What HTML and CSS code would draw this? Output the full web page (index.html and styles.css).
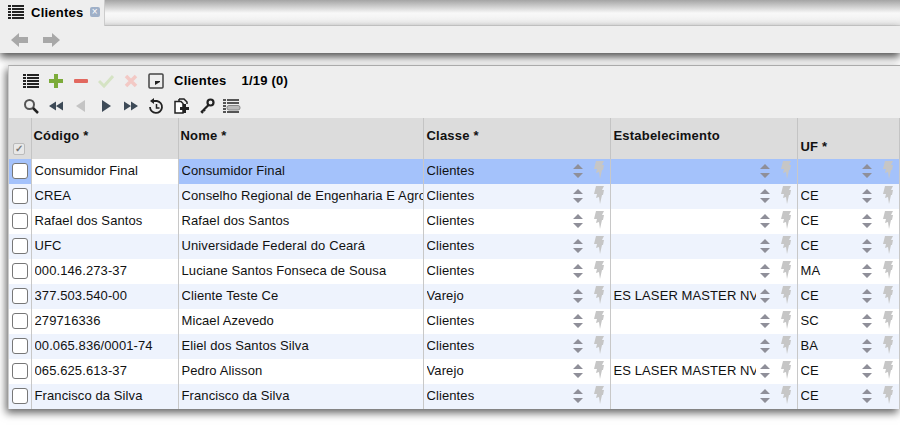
FILE: index.html
```html
<!DOCTYPE html>
<html lang="en">
<head>
    <meta charset="UTF-8">
    <title>Clientes</title>
    <link rel="stylesheet" href="styles.css">
</head>
<body>

<svg class="defs" width="0" height="0">
    <symbol id="i-list" viewBox="0 0 16 16"><path d="M0 1h3v2H0zM4 1h12v2H4zM0 4h3v2H0zM4 4h12v2H4zM0 7h3v2H0zM4 7h12v2H4zM0 10h3v2H0zM4 10h12v2H4zM0 13h3v2H0zM4 13h12v2H4z" fill="#222"/></symbol>
    <symbol id="i-sort" viewBox="0 0 10 14"><path d="M5 0l5 5H0zM5 14l5-5H0z" fill="#8f8f99"/></symbol>
    <symbol id="i-bolt" viewBox="0 0 10 18"><path d="M2 0h8L8 4h2L9 9H8l-2 9-1-7-3 1 1-4H0z" fill="#c6c6c6"/></symbol>
</svg>

<!-- abas -->
<div class="tabbar">
    <div class="tab">
        <svg class="tab-icon" width="16" height="16"><use href="#i-list"/></svg>
        <span class="tab-title">Clientes</span>
        <span class="tab-close">×</span>
    </div>
</div>
<div class="navbar">
    <svg width="17" height="14" viewBox="0 0 17 14"><path d="M8 0L0 7l8 7V10h9V4H8z" fill="#a8a8a8"/></svg>
    <svg width="17" height="14" viewBox="0 0 17 14"><path d="M9 0l8 7-8 7V10H0V4h9z" fill="#a8a8a8"/></svg>
</div>

<!-- painel -->
<div class="panel">
    <div class="toolbar">
        <div class="tool-row">
            <svg width="16" height="16"><use href="#i-list"/></svg>
            <svg width="16" height="16" viewBox="0 0 16 16"><path d="M6 1h4v5h5v4h-5v5H6v-5H1V6h5z" fill="#7cab3a"/></svg>
            <svg width="16" height="16" viewBox="0 0 16 16"><rect x="1" y="6" width="14" height="4" rx="1" fill="#e2685f"/></svg>
            <svg width="16" height="16" viewBox="0 0 16 16"><path d="M1 8l5 5 9-10" fill="none" stroke="#d5e3c4" stroke-width="3"/></svg>
            <svg width="16" height="16" viewBox="0 0 16 16"><path d="M3 3l10 10M13 3L3 13" fill="none" stroke="#f3c9c5" stroke-width="3.500"/></svg>
            <svg width="16" height="16" viewBox="0 0 16 16"><rect x="1" y="1" width="14" height="14" rx="1" fill="none" stroke="#444" stroke-width="1.500"/><path d="M7 12V8h5v1z" fill="#222"/></svg>
            <span class="panel-title">Clientes</span>
            <span class="panel-count">1/19 (0)</span>
        </div>
        <div class="tool-row">
            <svg width="16" height="16" viewBox="0 0 16 16"><circle cx="6.500" cy="6.500" r="4.500" fill="none" stroke="#555" stroke-width="2"/><path d="M10 10l5 5" stroke="#222" stroke-width="2.500"/></svg>
            <svg width="16" height="16" viewBox="0 0 16 16"><path d="M1 8l7-4.500v9zM8 8l7-4.500v9z" fill="#3d4a57"/></svg>
            <svg width="16" height="16" viewBox="0 0 16 16"><path d="M3 8l9-6v12z" fill="#c4c4c4"/></svg>
            <svg width="16" height="16" viewBox="0 0 16 16"><path d="M13 8L4 2v12z" fill="#3d4a57"/></svg>
            <svg width="16" height="16" viewBox="0 0 16 16"><path d="M15 8L8 3.500v9zM8 8L1 3.500v9z" fill="#3d4a57"/></svg>
            <svg width="16" height="16" viewBox="0 0 16 16"><path d="M4 3h5a6 6 0 1 1-7 6" fill="none" stroke="#222" stroke-width="1.800"/><path d="M6 0v6L2 3z" fill="#222"/><path d="M8.500 6v4h3" fill="none" stroke="#222" stroke-width="1.500"/></svg>
            <svg width="16" height="16" viewBox="0 0 16 16"><path d="M6 1h5l3 3v2M6 1v2" fill="none" stroke="#222" stroke-width="1.500"/><path d="M2 3.500h6l2 2V15H2z" fill="#fff" stroke="#222" stroke-width="1.500"/><path d="M10 6h3v3h3v3h-3v3h-3v-3H7V9h3z" fill="#222"/></svg>
            <svg class="tool-key" width="16" height="16" viewBox="0 0 16 16"><circle cx="11.500" cy="4.500" r="3" fill="none" stroke="#222" stroke-width="2.200"/><path d="M9.500 7l-7 7M4 11l2 2M2 13l2 2" stroke="#222" stroke-width="2.200"/></svg>
            <svg class="tool-fields" width="18" height="16" viewBox="0 0 18 16"><path d="M0 1h3v2H0zM4 1h12v2H4zM0 4h3v2H0zM4 4h12v2H4zM0 7h3v2H0zM0 10h3v2H0zM0 13h3v2H0zM4 13h12v2H4z" fill="#555"/><rect x="4" y="7.500" width="13" height="4.500" rx="2" fill="#bbb" stroke="#888"/></svg>
        </div>
    </div>

    <table class="grid">
        <colgroup>
            <col class="c-check"><col class="c-code"><col class="c-name"><col class="c-class"><col class="c-est"><col class="c-uf">
        </colgroup>
        <thead>
            <tr>
                <th class="th-check"><span class="check-all">✓</span></th>
                <th>Código *</th>
                <th>Nome *</th>
                <th class="th-right">Classe *</th>
                <th class="th-right">Estabelecimento</th>
                <th class="th-right th-low">UF *</th>
            </tr>
        </thead>
        <tbody id="rows"></tbody>
    </table>
</div>

<script src="rows.js"></script>
</body>
</html>
```

FILE: rows.js
```js
const clientes = [
    ['Consumidor Final', 'Consumidor Final', 'Clientes', '', ''],
    ['CREA', 'Conselho Regional de Engenharia E Agronomia', 'Clientes', '', 'CE'],
    ['Rafael dos Santos', 'Rafael dos Santos', 'Clientes', '', 'CE'],
    ['UFC', 'Universidade Federal do Ceará', 'Clientes', '', 'CE'],
    ['000.146.273-37', 'Luciane Santos Fonseca de Sousa', 'Clientes', '', 'MA'],
    ['377.503.540-00', 'Cliente Teste Ce', 'Varejo', 'ES LASER MASTER NV', 'CE'],
    ['279716336', 'Micael Azevedo', 'Clientes', '', 'SC'],
    ['00.065.836/0001-74', 'Eliel dos Santos Silva', 'Clientes', '', 'BA'],
    ['065.625.613-37', 'Pedro Alisson', 'Varejo', 'ES LASER MASTER NV', 'CE'],
    ['Francisco da Silva', 'Francisco da Silva', 'Clientes', '', 'CE']
];

const tools = '<span class="cell-tools">'
    + '<svg class="t-sort" width="10" height="14"><use href="#i-sort"/></svg>'
    + '<svg class="t-bolt" width="10" height="18"><use href="#i-bolt"/></svg>'
    + '</span>';

function lookup(text) {
    return `<td><div class="cell"><span class="cell-text">${text}</span>${tools}</div></td>`;
}

document.getElementById('rows').innerHTML = clientes.map((c, i) => `
    <tr class="${i === 0 ? 'selected' : i % 2 ? 'alt' : ''}">
        <td class="td-check"><span class="check"></span></td>
        <td class="td-code"><div class="cell"><span class="cell-text">${c[0]}</span></div></td>
        <td class="td-name"><div class="cell"><span class="cell-text">${c[1]}</span></div></td>
        ${lookup(c[2])}${lookup(c[3])}${lookup(c[4])}
    </tr>`).join('');
```

FILE: styles.css
```css
body {
    margin: 0;
    height: 433px;
    overflow: hidden;
    background-color: #fff;
    font-family: "Liberation Sans", Arial, sans-serif;
    font-size: 13px;
    color: #111;
}

.defs {
    position: absolute;
}

/* abas */
.tabbar {
    height: 26px;
    display: flex;
    background: linear-gradient(#a4a4a4, #f8f8f8 13px, #f6f6f6 16px, #e8e8e8 25px);
    border-bottom: 1px solid #d5d5d5;
    box-sizing: border-box;
}

.tab {
    width: 105px;
    height: 26px;
    box-sizing: border-box;
    display: flex;
    align-items: center;
    padding: 0 0 2px 8px;
    background-color: #eee;
    border-right: 1px solid #ccc;
}

.tab-title {
    margin-left: 7px;
    font-weight: bold;
    letter-spacing: 0.25px;
    color: #000;
}

.tab-close {
    width: 10px;
    height: 10px;
    margin-left: 6px;
    border-radius: 2px;
    background-color: #9fb0c8;
    color: #fff;
    font-size: 10px;
    line-height: 10px;
    text-align: center;
}

.navbar {
    height: 27px;
    box-sizing: border-box;
    display: flex;
    align-items: center;
    gap: 15px;
    padding: 0 0 0 11px;
    background-color: #eee;
    box-shadow: 0 4px 9px rgba(0, 0, 0, 0.7);
}

/* painel */
.panel {
    width: 891px;
    margin: 12px 0 0 8px;
    background-color: #eee;
    box-shadow: -2px 4px 8px rgba(0, 0, 0, 0.6);
    border-top: 1px solid #aaa;
    border-left: 1px solid #ccc;
    position: relative;
}

.toolbar {
    height: 52px;
    box-sizing: border-box;
    padding: 2px 0 0 14px;
}

.tool-row {
    height: 25px;
    display: flex;
    align-items: center;
    gap: 9px;
}

.tool-key {
    margin-left: 1px;
}

.tool-fields {
    margin-left: -1px;
}

.panel-title {
    margin-left: 1px;
    font-weight: bold;
    letter-spacing: 0.25px;
    color: #000;
}

.panel-count {
    margin-left: 6px;
    font-weight: bold;
    letter-spacing: 0.2px;
    color: #000;
}

/* tabela */
.grid {
    width: 890px;
    table-layout: fixed;
    border-collapse: collapse;
}

.c-check { width: 22px; }
.c-code { width: 147px; }
.c-name { width: 245px; }
.c-class { width: 187px; }
.c-est { width: 187px; }
.c-uf { width: 102px; }

.grid th {
    height: 41px;
    padding: 10px 0 0 2px;
    box-sizing: border-box;
    vertical-align: top;
    text-align: left;
    font-weight: bold;
    letter-spacing: 0.2px;
    background-color: #dcdcdc;
    border-right: 1px solid #c4c4c4;
}

.grid .th-right {
    padding-left: 3px;
}

.grid .th-low {
    padding-top: 21px;
}

.grid .th-check {
    padding: 25px 0 0 4px;
}

.check-all {
    display: block;
    width: 12px;
    height: 12px;
    box-sizing: border-box;
    border: 1px solid #bbb;
    border-radius: 2px;
    background-color: #e8e8e8;
    color: #777;
    font-size: 10px;
    line-height: 10px;
    text-align: center;
}

.grid td {
    height: 25px;
    padding: 0;
    box-sizing: border-box;
    background-color: #fff;
    border-right: 1px solid #c8c8c8;
    letter-spacing: 0.1px;
}

.grid tr.alt td {
    background-color: #eef3fd;
}

.grid tr.selected td {
    background-color: #a4c2fb;
}

.grid tr.selected .td-code {
    background-color: #fff;
}

.check {
    display: block;
    width: 16px;
    height: 16px;
    box-sizing: border-box;
    margin: -1px 0 0 3px;
    border: 1px solid #777;
    border-radius: 3px;
    background-color: #fff;
}

.cell {
    display: flex;
    align-items: center;
    padding: 0 0 2px 3px;
    height: 25px;
    box-sizing: border-box;
}

.cell-text {
    flex: 1;
    min-width: 0;
    overflow: hidden;
    white-space: nowrap;
}

.cell-tools {
    flex: none;
    display: flex;
    align-items: center;
    gap: 11px;
    padding: 0 6px 0 4px;
}

.t-bolt {
    margin-top: -1px;
}
```
